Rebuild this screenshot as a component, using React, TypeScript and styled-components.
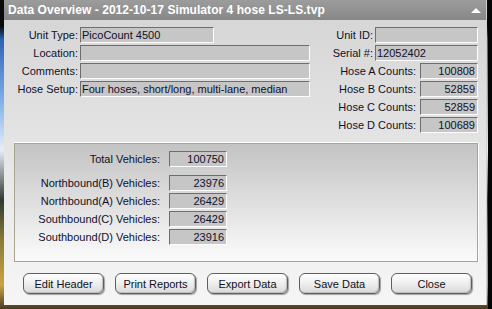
import styled, { createGlobalStyle } from 'styled-components';

const GlobalStyle = createGlobalStyle`
  html, body {
    margin: 0;
    padding: 0;
  }
  body {
    width: 492px;
    height: 309px;
    overflow: hidden;
    font-family: "Liberation Sans", Arial, sans-serif;
    background:
      linear-gradient(to right, transparent 0 488px, #050505 488px),
      linear-gradient(
        to bottom,
        #0a0a0a 0,
        #0a0a0a 26px,
        #2f63b4 40px,
        #7eaee6 100px,
        #e6eef8 150px,
        #2e3a30 200px,
        #8a7a3a 240px,
        #c9a445 285px,
        #4a3a20 309px
      );
  }
`;

const Window = styled.div`
  margin-left: 4px;
  width: 483px;
  height: 305px;
  display: flex;
  flex-direction: column;
  border-right: 1px solid #cfcfcf;
  background: linear-gradient(to bottom, #d4d4d4, #f6f6f6);
  box-sizing: border-box;
`;

const TitleBar = styled.div`
  height: 20px;
  flex: none;
  display: flex;
  align-items: center;
  justify-content: space-between;
  padding: 0 4px 0 4px;
  background: linear-gradient(to bottom, #9c9c9c, #878787);
  color: #fff;
  font-weight: bold;
  font-size: 12px;
  letter-spacing: 0.05px;
`;

const UpArrow = styled.span`
  width: 0;
  height: 0;
  border-left: 5px solid transparent;
  border-right: 5px solid transparent;
  border-bottom: 5px solid #fff;
  margin-right: 1px;
`;

const Content = styled.div`
  flex: 1;
  display: flex;
  flex-direction: column;
  padding: 7px 8px 0 0;
`;

const HeaderArea = styled.div`
  display: flex;
  justify-content: space-between;
  height: 107px;
`;

const Column = styled.div`
  display: flex;
  flex-direction: column;
  gap: 2px;
`;

const Row = styled.div<{ $gap?: number }>`
  display: flex;
  align-items: center;
  justify-content: flex-end;
  gap: ${(p) => p.$gap ?? 2}px;
  height: 16px;
`;

const Label = styled.span<{ $width?: number }>`
  ${(p) => (p.$width ? `width: ${p.$width}px;` : '')}
  text-align: right;
  font-size: 11px;
  color: #10102a;
  white-space: nowrap;
`;

const Field = styled.div<{ $width: number; $right?: boolean }>`
  width: ${(p) => p.$width}px;
  height: 16px;
  box-sizing: border-box;
  background: #c6c6c6;
  border-top: 1px solid #6e6e6e;
  border-left: 1px solid #6e6e6e;
  border-bottom: 1px solid #fdfdfd;
  border-right: 1px solid #fdfdfd;
  font-size: 11px;
  line-height: 14px;
  color: #10102a;
  padding: 0 2px 0 1px;
  text-align: ${(p) => (p.$right ? 'right' : 'left')};
  white-space: nowrap;
  overflow: hidden;
`;

const LeftRow = styled(Row)`
  justify-content: flex-start;
`;

const Group = styled.div`
  margin: 9px 0 0 10px;
  height: 119px;
  flex: none;
  box-sizing: border-box;
  border: 1px solid #a9a593;
  box-shadow: 0 -1px 0 #fff, 1px 0 0 #fff;
  background: linear-gradient(to bottom, #c3c3c3, #fbfbfb);
  padding: 7px 0 0 0;
  display: flex;
  flex-direction: column;
  gap: 2px;
`;

const TotalRow = styled(LeftRow)`
  margin-bottom: 6px;
`;

const ButtonBar = styled.div`
  display: flex;
  gap: 11px;
  padding: 11px 0 0 19px;
`;

const Button = styled.button`
  width: 81px;
  height: 21px;
  box-sizing: border-box;
  border: 1px solid #5e5e5e;
  border-radius: 6px;
  background: linear-gradient(to bottom, #ffffff, #f0f0f0 45%, #dadada);
  box-shadow: 1px 1px 1px #a0a0a0, inset -1px -1px 1px #bdbdbd;
  font-family: "Liberation Sans", Arial, sans-serif;
  font-size: 11px;
  color: #101020;
  padding: 0;
  cursor: pointer;
`;

const header = [
  { label: 'Unit Type:', value: 'PicoCount 4500', width: 134 },
  { label: 'Location:', value: '', width: 230 },
  { label: 'Comments:', value: '', width: 230 },
  { label: 'Hose Setup:', value: 'Four hoses, short/long, multi-lane, median', width: 230 },
];

const unit = [
  { label: 'Unit ID:', value: '' },
  { label: 'Serial #:', value: '12052402' },
];

const hoses = [
  { label: 'Hose A Counts:', value: '100808' },
  { label: 'Hose B Counts:', value: '52859' },
  { label: 'Hose C Counts:', value: '52859' },
  { label: 'Hose D Counts:', value: '100689' },
];

const directions = [
  { label: 'Northbound(B) Vehicles:', value: '23976' },
  { label: 'Northbound(A) Vehicles:', value: '26429' },
  { label: 'Southbound(C) Vehicles:', value: '26429' },
  { label: 'Southbound(D) Vehicles:', value: '23916' },
];

const buttons = ['Edit Header', 'Print Reports', 'Export Data', 'Save Data', 'Close'];

export default function App() {
  return (
    <>
      <GlobalStyle />
      <Window>
        <TitleBar>
          <span>Data Overview - 2012-10-17 Simulator 4 hose LS-LS.tvp</span>
          <UpArrow />
        </TitleBar>
        <Content>
          <HeaderArea>
            <Column>
              {header.map((h) => (
                <LeftRow key={h.label}>
                  <Label $width={74}>{h.label}</Label>
                  <Field $width={h.width}>{h.value}</Field>
                </LeftRow>
              ))}
            </Column>
            <Column>
              {unit.map((u) => (
                <Row key={u.label}>
                  <Label>{u.label}</Label>
                  <Field $width={103}>{u.value}</Field>
                </Row>
              ))}
              {hoses.map((h) => (
                <Row key={h.label} $gap={4}>
                  <Label>{h.label}</Label>
                  <Field $width={58} $right>
                    {h.value}
                  </Field>
                </Row>
              ))}
            </Column>
          </HeaderArea>
          <Group>
            <TotalRow $gap={9}>
              <Label $width={145}>Total Vehicles:</Label>
              <Field $width={58} $right>
                100750
              </Field>
            </TotalRow>
            {directions.map((d) => (
              <LeftRow key={d.label} $gap={9}>
                <Label $width={145}>{d.label}</Label>
                <Field $width={58} $right>
                  {d.value}
                </Field>
              </LeftRow>
            ))}
          </Group>
          <ButtonBar>
            {buttons.map((b) => (
              <Button key={b}>{b}</Button>
            ))}
          </ButtonBar>
        </Content>
      </Window>
    </>
  );
}
